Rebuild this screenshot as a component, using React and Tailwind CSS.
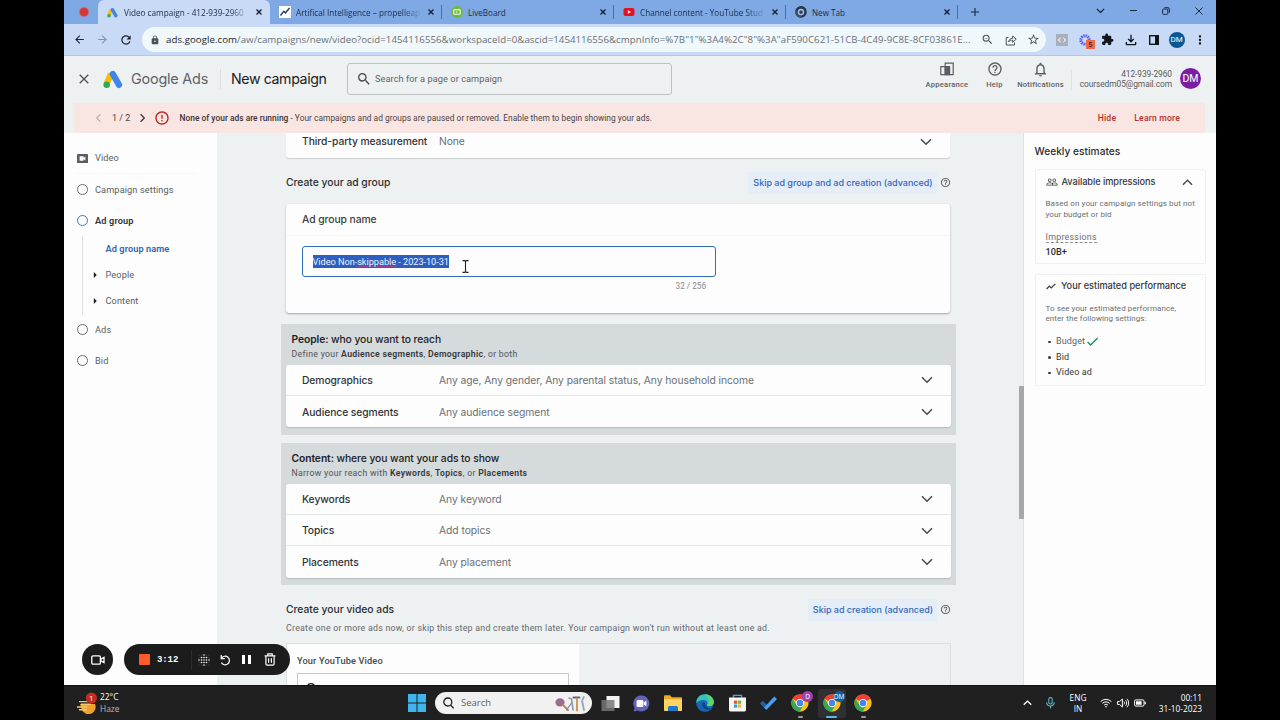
import React from 'react';
import {
    MdArrowBack, MdArrowForward, MdRefresh, MdLock, MdZoomOut, MdStarBorder, MdExtension, MdOutlineFileDownload,
    MdMoreVert, MdSearch, MdErrorOutline, MdHelpOutline, MdNotificationsNone, MdPeopleOutline, MdCheck,
    MdArrowRight, MdCode, MdAdd
} from 'react-icons/md';

const gsans = "font-['Inter','Liberation_Sans',sans-serif]";
const segoe = "font-['Open_Sans','Noto_Sans',sans-serif]";

function Chevron({ className = '', d = 'M1 1.2 6 6.2 11 1.2', w = 12, h = 7.5, sw = 1.5 }) {
    return (
        <svg width={w} height={h} viewBox="0 0 12 7.5" fill="none" stroke="currentColor" strokeWidth={sw} className={className}>
            <path d={d} />
        </svg>
    );
}

function AdsLogo({ size }) {
    return (
        <svg width={size} height={size} viewBox="0 0 24 24" className="shrink-0">
            <path d="M9.4 6 4.4 18" stroke="#fbbc04" strokeWidth="7.4" />
            <path d="M11.8 6 19.2 19" stroke="#4285e8" strokeWidth="7.6" strokeLinecap="round" />
            <circle cx="4.4" cy="19" r="3.9" fill="#34a853" />
        </svg>
    );
}

function ChromeLogo({ size, mono }) {
    return (
        <svg width={size} height={size} viewBox="0 0 48 48">
            <circle cx="24" cy="24" r="23" fill={mono ? '#27384d' : '#fbc116'} />
            <path d="M24 24 4 12.6A23 23 0 0 1 44 12.6Z" fill={mono ? '#27384d' : '#ea4335'} />
            <path d="M24 1A23 23 0 0 1 44 13H24Z" fill={mono ? '#27384d' : '#ea4335'} />
            <path d="M4 12.6A23 23 0 0 0 23 47L33.5 29.5 24 35 14.5 29.5Z" fill={mono ? '#3c4f66' : '#34a853'} />
            <circle cx="24" cy="24" r={mono ? 13 : 11} fill={mono ? '#a8c2e6' : '#fff'} />
            <circle cx="24" cy="24" r={mono ? 7.5 : 8.6} fill={mono ? '#33465c' : '#4285f4'} />
        </svg>
    );
}

function TabIcon({ kind }) {
    if (kind === 'ads') return <AdsLogo size={11} />;
    if (kind === 'chart') {
        return (
            <svg width="12" height="12" viewBox="0 0 12 12">
                <rect width="12" height="12" fill="#fff" />
                <path d="M1.5 9.5 4.8 5.2 6.4 7 10.5 2" fill="none" stroke="#1d3557" strokeWidth="1.3" />
            </svg>
        );
    }
    if (kind === 'live') {
        return (
            <svg width="12" height="12" viewBox="0 0 12 12">
                <circle cx="6" cy="6" r="6" fill="#6cbb3c" />
                <rect x="2.8" y="3.6" width="6.4" height="4.6" rx="1" fill="none" stroke="#fff" strokeWidth="1.1" />
                <path d="M5.2 5v2l1.6-1Z" fill="#fff" />
            </svg>
        );
    }
    if (kind === 'yt') {
        return (
            <svg width="12" height="12" viewBox="0 0 12 12">
                <rect x="0.5" y="1.9" width="11" height="8.2" rx="2" fill="#e8101c" />
                <path d="M4.9 4.2v3.6L8 6Z" fill="#fff" />
            </svg>
        );
    }
    return <ChromeLogo size={12} mono />;
}

const tabs = [
    { kind: 'ads', title: 'Video campaign - 412-939-2960', active: true },
    { kind: 'chart', title: 'Artifical Intelligence – propelleap' },
    { kind: 'live', title: 'LiveBoard' },
    { kind: 'yt', title: 'Channel content - YouTube Stud' },
    { kind: 'chrome', title: 'New Tab' },
];

function TabStrip() {
    return (
        <div className={`flex h-6 bg-[#7fa9e5] text-[#1c2b42] ${segoe}`}>
            <div className="flex w-[34px] shrink-0 items-center justify-center pl-1.5">
                <span className="h-2 w-2 rounded-full bg-[#d6372f] ring-1 ring-[#bb6a7a]" />
            </div>
            {tabs.map((tab) => (
                <div
                    key={tab.title}
                    className={tab.active
                        ? 'flex w-[172px] shrink-0 items-center rounded-t-md bg-[#c8daf6] pl-[9px]'
                        : 'flex w-[172px] shrink-0 items-center pl-[9px]'}
                >
                    <div className="flex w-[17px] shrink-0"><TabIcon kind={tab.kind} /></div>
                    <div className={tab.title.length > 20
                        ? 'w-[124px] shrink-0 mask-r-from-86% mask-r-to-102% pt-px text-[8.2px] leading-6 whitespace-nowrap'
                        : 'w-[124px] shrink-0 pt-px text-[8.1px] leading-6 whitespace-nowrap'}
                    >
                        {tab.title}
                    </div>
                    <div className="flex flex-1 justify-center">
                        <svg width="6" height="6" viewBox="0 0 6 6" stroke="#17202e" strokeWidth="1.4"><path d="M.5.5l5 5M5.5.5l-5 5" /></svg>
                    </div>
                    {!tab.active && <div className="h-3.5 w-px bg-[#4d6f9f]" />}
                </div>
            ))}
            <div className="flex w-[33px] items-center justify-center"><MdAdd size={14} /></div>
            <div className="ml-auto flex w-[133px] items-center justify-around pb-[3px] text-[#1b2a3f]">
                <Chevron w={9} h={5.5} sw={1.8} />
                <div className="h-px w-[7px] bg-[#1b2a3f]" />
                <svg width="8" height="8" viewBox="0 0 8 8" fill="none" stroke="currentColor"><rect x=".6" y="2" width="5.2" height="5.4" rx="1" /><path d="M2.3.7H6A1.3 1.3 0 0 1 7.3 2V6" /></svg>
                <svg width="8" height="8" viewBox="0 0 8 8" stroke="currentColor"><path d="m.5.5 7 7m0-7-7 7" /></svg>
            </div>
        </div>
    );
}

function AddressBar() {
    return (
        <div className={`flex h-[31px] items-center bg-[#c8daf6] pl-1 ${segoe}`}>
            <div className="flex w-[74px] shrink-0 text-[#1d2530]">
                <div className="flex w-[23px] justify-center"><MdArrowBack size={13} /></div>
                <div className="flex w-[23px] justify-center text-[#8393ab]"><MdArrowForward size={13} /></div>
                <div className="flex w-[23px] justify-center"><MdRefresh size={14} /></div>
            </div>
            <div className="flex h-[25px] w-[904px] shrink-0 items-center rounded-full bg-[#f0f8fc] text-[#4c5156]">
                <div className="flex w-6 shrink-0 justify-center pl-px"><MdLock size={10} /></div>
                <div className="w-[810px] shrink-0 text-[9.7px] leading-6 tracking-[0.04px] whitespace-nowrap text-[#6a7076]">
                    <span className="text-[#1f2327]">ads.google.com</span>/aw/campaigns/new/video?ocid=1454116556&amp;workspaceId=0&amp;ascid=1454116556&amp;cmpnInfo=%7B"1"%3A4%2C"8"%3A"aF590C621-51CB-4C49-9C8E-8CF03861E...
                </div>
                <div className="flex w-[23px] shrink-0 justify-center"><MdZoomOut size={13} /></div>
                <div className="flex w-[23px] shrink-0 justify-center">
                    <svg width="12" height="12" viewBox="0 0 12 12" fill="none" stroke="currentColor"><path d="M3.5 3.5H1.2V11H9.5V8.5" /><path d="M3.6 8C4 5.4 5.6 4.4 7.6 4.3V2l3.6 3.2L7.6 8.3V6.2C6 6.1 4.7 6.6 3.6 8Z" /></svg>
                </div>
                <div className="flex w-[23px] shrink-0 justify-center"><MdStarBorder size={13} /></div>
            </div>
            <div className="flex flex-1 items-center pl-1 text-[#11161c]">
                <div className="flex w-[23px] justify-center">
                    <div className="flex h-3 w-3 items-center justify-center bg-[#a8b0bb] text-white"><MdCode size={10} /></div>
                </div>
                <div className="relative flex w-[23px] justify-center">
                    <svg width="12" height="12" viewBox="0 0 12 12" fill="none" stroke="#5a5be8" strokeWidth="3"><circle cx="6" cy="6" r="4.2" strokeDasharray="1.4 .8" /></svg>
                    <div className="absolute top-[6px] left-[13px] h-[9px] w-[9px] bg-[#ef6a4a] text-center text-[7px] leading-[9px] font-semibold text-[#3a1710]">5</div>
                </div>
                <div className="flex w-[23px] justify-center"><MdExtension size={13} /></div>
                <div className="flex w-[23px] justify-center"><MdOutlineFileDownload size={16} /></div>
                <div className="flex w-[23px] justify-center">
                    <svg width="10" height="10" viewBox="0 0 10 10"><rect x=".7" y=".7" width="8.6" height="8.6" fill="none" stroke="currentColor" strokeWidth="1.4" /><path d="M6 0h4v10H6Z" fill="currentColor" /></svg>
                </div>
                <div className="flex w-[23px] justify-center">
                    <div className="h-4 w-4 shrink-0 rounded-full bg-[#0b5794] text-center font-[Roboto] text-[8px] leading-4 text-white">DM</div>
                </div>
                <div className="flex w-[23px] justify-center"><MdMoreVert size={14} /></div>
            </div>
        </div>
    );
}

function HeaderAction({ icon, label, width }) {
    return (
        <div className={`flex flex-col items-center gap-[3px] text-[#5a5f64] ${width}`}>
            <div className="flex h-[15px] items-center">{icon}</div>
            <div className="text-[7.6px] leading-[10px] font-medium tracking-[0.22px]">{label}</div>
        </div>
    );
}

function AdsHeader() {
    return (
        <div className="flex h-[47px] items-center pb-[2px]">
            <div className="flex w-[39px] shrink-0 justify-center pl-px text-[#4e5256]">
                <svg width="10" height="10" viewBox="0 0 10 10" stroke="currentColor" strokeWidth="1.3"><path d="m.7.7 8.6 8.6M9.3.7.7 9.3" /></svg>
            </div>
            <div className="w-7 shrink-0"><AdsLogo size={20} /></div>
            <div className={`w-[89px] shrink-0 text-[14.4px] tracking-[-0.2px] whitespace-nowrap text-[#5f6368] ${gsans}`}>Google Ads</div>
            <div className="h-5 w-px shrink-0 bg-[#dcdfe1]" />
            <div className={`w-[126px] shrink-0 pl-[10px] text-[14.2px] tracking-[-0.4px] whitespace-nowrap text-[#202124] ${gsans}`}>New campaign</div>
            <div className="flex h-8 w-[325px] shrink-0 items-center rounded-[3px] border border-[#bcc2c2] pl-2">
                <MdSearch size={16} className="text-[#44484c]" />
                <div className="pl-[3px] text-[9.2px] tracking-[0.07px] text-[#5f6368]">Search for a page or campaign</div>
            </div>
            <div className="ml-auto flex h-9 items-start pt-px">
                <HeaderAction width="w-[50px]" label="Appearance" icon={(
                    <svg width="14" height="14" viewBox="0 0 14 14" fill="none" stroke="currentColor" strokeWidth="1.2"><path d="M5.2 4.6H.8V12.7H5.2M5.2 12.7V1.2H13.2V12.7Z" /><path d="M5.2 4.7H9.6V12.7H5.2Z" fill="currentColor" /></svg>
                )} />
                <HeaderAction width="w-[45px]" label="Help" icon={<MdHelpOutline size={16} />} />
                <HeaderAction width="w-[47px]" label="Notifications" icon={<MdNotificationsNone size={17} />} />
                <div className="mt-2 ml-[7px] h-5 w-px bg-[#e0e3e4]" />
            </div>
            <div className="w-[100px] pt-px text-right text-[8.4px] leading-[10.5px] tracking-[-0.07px] whitespace-nowrap text-[#575b60]">
                <div>412-939-2960</div>
                <div>coursedm05@gmail.com</div>
            </div>
            <div className="mr-[15px] ml-[8px] h-[21px] w-[21px] shrink-0 rounded-full bg-[#7b1fa2] text-center text-[10.5px] leading-[21px] text-white">DM</div>
        </div>
    );
}

function AlertBanner() {
    return (
        <div className="mr-[11px] ml-[10px] flex h-[30px] items-center bg-[#f9e6e3] text-[8.4px] text-[#4b4443]">
            <Chevron className="ml-5 shrink-0 rotate-90 text-[#b9adab]" w={9} h={6} />
            <div className="w-[25px] shrink-0 pt-px pl-[9px] text-[9px] tracking-[0.02px] whitespace-nowrap">1 / 2</div>
            <Chevron className="ml-[10px] shrink-0 -rotate-90 text-[#3a3434]" w={9} h={6} sw={1.7} />
            <MdErrorOutline size={16} className="ml-[6.5px] shrink-0 text-[#b3261e]" />
            <div className="w-[480px] pl-[10px] tracking-[0.02px] whitespace-nowrap">
                <span className="font-medium text-[#3a3232]">None of your ads are running</span> - Your campaigns and ad groups are paused or removed. Enable them to begin showing your ads.
            </div>
            <div className="mr-[25px] ml-auto flex gap-[18px] text-[8.6px] font-medium tracking-[0.2px] text-[#b3322c]">
                <span>Hide</span>
                <span>Learn more</span>
            </div>
        </div>
    );
}

function Step({ label, active, className }) {
    return (
        <div className={`flex items-center ${className}`}>
            <span className={active
                ? 'h-[11px] w-[11px] rounded-full border-[1.5px] border-[#3b7cc4]'
                : 'h-[11px] w-[11px] rounded-full border-[1.5px] border-[#6a6e72]'} />
            <span className={active
                ? 'pl-[7px] text-[9.2px] font-semibold tracking-[0.15px] text-[#303336]'
                : 'pl-[7px] text-[9.2px] tracking-[0.11px] text-[#5b5f63]'}>{label}</span>
        </div>
    );
}

function Sidebar() {
    return (
        <div className="w-[153px] shrink-0 bg-[#fdfdfd] pl-[13px] text-[9.2px] text-[#5b5f63]">
            <div className="mt-3 flex h-[26px] items-center">
                <svg width="11" height="9" viewBox="0 0 11 9"><rect width="11" height="9" rx=".6" fill="#5a5e62" /><path d="M2.6 2.2h4v1.7l1.8-1.3v3.8L6.6 5.100v1.700h-4Z" fill="#fdfdfd" /></svg>
                <span className="pl-[7px] tracking-[0.1px]">Video</span>
            </div>
            <div className="mt-[2px] mr-5 h-px bg-[#f8f8f8]" />
            <Step label="Campaign settings" className="h-[31px]" />
            <Step label="Ad group" active className="h-[31px]" />
            <div className="ml-[5px] h-[79px] border-l border-[#dfe1e3]">
                <div className="flex h-[26px] items-center pl-[22.5px] font-semibold tracking-[0.08px] text-[#2c66b0]">Ad group name</div>
                <div className="flex h-[26px] items-center pl-[5px]"><MdArrowRight size={14} className="text-[#1c1c1c]" /><span className="pl-[3.5px] tracking-[0.1px]">People</span></div>
                <div className="flex h-[26px] items-center pl-[5px]"><MdArrowRight size={14} className="text-[#1c1c1c]" /><span className="pl-[3.5px] tracking-[0.1px]">Content</span></div>
            </div>
            <Step label="Ads" className="h-[29px]" />
            <Step label="Bid" className="h-[33px]" />
        </div>
    );
}

function SettingRow({ label, value, className = '' }) {
    return (
        <div className={`flex h-[31.2px] items-center pl-4 text-[10.3px] text-[#303437] ${gsans} ${className}`}>
            <span className="w-[137px] shrink-0 pt-px font-medium tracking-[-0.07px] whitespace-nowrap">{label}</span>
            <span className="flex-1 pt-px tracking-[-0.05px] whitespace-nowrap text-[#6b6f73]">{value}</span>
            <Chevron className="mr-[18px] text-[#45494c]" />
        </div>
    );
}

function SkipLink({ children, width }) {
    return (
        <div className="flex items-center">
            <div className={`flex h-[22px] items-center justify-center bg-[#e5eef8] pl-px text-[9px] font-medium tracking-[-0.02px] whitespace-nowrap text-[#3068b8] ${gsans} ${width}`}>{children}</div>
            <MdHelpOutline size={11} className="ml-[3px] text-[#5a5e62]" />
        </div>
    );
}

function TargetGroup({ name, rest, hint, rows, className }) {
    return (
        <div className={`-mx-[5px] bg-[#d5dadc] px-[5px] ${className}`}>
            <div className={`h-[23px] pt-2 pl-[5.5px] text-[10.3px] leading-[15px] font-medium tracking-[-0.08px] text-[#1f2225] ${gsans}`}>
                <span className="font-semibold">{name}</span> {rest}
            </div>
            <div className="h-[18px] pl-[5.5px] text-[8.7px] leading-[14px] tracking-[0.31px] text-[#505458]">{hint}</div>
            <div className="divide-y divide-[#e3e6e7] rounded-[3px] bg-[#fdfdfd] shadow-[0_1px_1.5px_#b4b9bb]">
                {rows.map(([label, value]) => <SettingRow key={label} label={label} value={value} />)}
            </div>
        </div>
    );
}

function MainColumn() {
    return (
        <div className="relative h-[552px] w-[807px] shrink-0 overflow-hidden bg-[#eef1f1] pr-[73px] pl-[69px] shadow-[inset_-1px_0_0_#dfe2e3]">
            <div className="mr-px h-[25px] rounded-b-[3px] bg-[#fdfdfd] shadow-[0_1px_1px_#ccd0d2]">
                <SettingRow label="Third-party measurement" value="None" className="-translate-y-[7px]" />
            </div>

            <div className="flex h-[46px] items-center justify-between pt-[3px]">
                <h2 className={`text-[10.3px] font-medium text-[#2b2e31] ${gsans}`}>Create your ad group</h2>
                <SkipLink width="w-[189px]">Skip ad group and ad creation (advanced)</SkipLink>
            </div>

            <div className="mr-px h-[109px] rounded-[3px] bg-[#fdfdfd] shadow-[0_1px_2px_#9fa5a7]">
                <div className={`flex h-8 items-center border-b border-[#f6f7f7] pt-px pl-4 text-[10.3px] font-medium tracking-[-0.05px] text-[#3a3d40] ${gsans}`}>Ad group name</div>
                <div className="mt-[10px] ml-4 w-[414px]">
                    <div className="flex h-[31px] items-center rounded-[3px] border-[1.5px] border-[#2f6fba] pl-[9.5px]">
                        <span className="bg-[#2c5fc0] text-[9.2px] leading-[13px] tracking-[-0.04px] whitespace-nowrap text-[#eef3fb]">
                            Video Non-<span className="underline decoration-[#93479a] decoration-1">skippable</span> - 2023-10-31
                        </span>
                        <svg width="7" height="13" viewBox="0 0 7 13" fill="none" stroke="#222" strokeWidth="1.1" className="mt-2.5 ml-[12.5px]"><path d="M.5.6H2.6L3.5 1.4 4.4.6H6.5M3.5 1.4V11.6M.5 12.4H2.6L3.5 11.6 4.4 12.4H6.5" /></svg>
                    </div>
                    <div className="pt-[3px] pr-[10px] text-right text-[8.2px] leading-3 text-[#85898c]">32 / 256</div>
                </div>
            </div>

            <TargetGroup
                className="mt-[11px] h-[111px]"
                name="People:"
                rest="who you want to reach"
                hint={<>Define your <b className="font-semibold text-[#33373a]">Audience segments</b>, <b className="font-semibold text-[#33373a]">Demographic</b>, or both</>}
                rows={[
                    ['Demographics', 'Any age, Any gender, Any parental status, Any household income'],
                    ['Audience segments', 'Any audience segment'],
                ]}
            />
            <TargetGroup
                className="mt-2 h-[142px]"
                name="Content:"
                rest="where you want your ads to show"
                hint={<>Narrow your reach with <b className="font-semibold text-[#33373a]">Keywords</b>, <b className="font-semibold text-[#33373a]">Topics</b>, or <b className="font-semibold text-[#33373a]">Placements</b></>}
                rows={[
                    ['Keywords', 'Any keyword'],
                    ['Topics', 'Add topics'],
                    ['Placements', 'Any placement'],
                ]}
            />

            <div className="mt-[13px] flex h-[23px] items-center justify-between">
                <h2 className={`pt-px text-[10.3px] font-medium text-[#2b2e31] ${gsans}`}>Create your video ads</h2>
                <SkipLink width="w-[129px]">Skip ad creation (advanced)</SkipLink>
            </div>
            <p className="h-[22px] text-[8.8px] leading-[14px] tracking-[0.25px] whitespace-nowrap text-[#64686c]">
                Create one or more ads now, or skip this step and create them later. Your campaign won't run without at least one ad.
            </p>
            <div className="h-[60px] border border-[#dcdfe0]">
                <div className="h-full w-[292px] bg-[#fdfdfd] pt-[10px] pl-[10px]">
                    <div className="text-[9.2px] leading-[14px] font-medium tracking-[0.15px] text-[#44484b]">Your YouTube Video</div>
                    <div className="mt-[5px] h-10 w-[272px] border border-[#c4c8ca] pt-[7px] pl-[7px]"><MdSearch size={15} className="text-[#111]" /></div>
                </div>
            </div>

            <div className="absolute top-[253px] right-0 h-[133px] w-[5px] bg-[#a5a9aa]" />
        </div>
    );
}

function Estimates() {
    return (
        <div className="min-w-0 flex-1 bg-[#fdfdfd] pr-[10px] pl-[10.5px] text-[8.4px] leading-[10.5px] text-[#6a6e72]">
            <h2 className={`h-9 pt-[10.4px] text-[10.2px] leading-4 font-medium text-[#2b2e31] ${gsans}`}>Weekly estimates</h2>
            <div className="h-[95px] rounded-[2px] border border-[#eff0f1] px-[10px]">
                <div className="flex h-6 items-center">
                    <MdPeopleOutline size={12} className="shrink-0 text-[#33373a]" />
                    <span className={`flex-1 pl-1 text-[9.2px] font-medium tracking-[-0.06px] whitespace-nowrap text-[#33373a] ${gsans}`}>Available impressions</span>
                    <Chevron d="M1 6.2 6 1.2 11 6.2" w={11} h={7} className="mr-[2px] text-[#45494c]" />
                </div>
                <div className="mt-[5px] text-[8px] tracking-[0.1px] whitespace-nowrap">Based on your campaign settings but not<br />your budget or bid</div>
                <div className="mt-[11.5px] flex"><span className="border-b border-dashed border-[#8a8e92] text-[8.8px] tracking-[0.28px]">Impressions</span></div>
                <div className="mt-[3.5px] text-[9.2px] font-medium text-[#2b2e31]">10B+</div>
            </div>
            <div className="mt-[10px] h-[112px] rounded-[2px] border border-[#eff0f1] px-[10px]">
                <div className="flex h-[23px] items-center">
                    <svg width="10" height="7" viewBox="0 0 10 7" fill="none" stroke="#33373a" strokeWidth="1.2"><path d="M.6 6 3.4 3.2 5.2 5 9.4.8" /></svg>
                    <span className={`pl-[5.5px] text-[9.2px] font-medium whitespace-nowrap text-[#33373a] ${gsans}`}>Your estimated performance</span>
                </div>
                <div className="mt-[5.5px] text-[8px] tracking-[0.08px] whitespace-nowrap">To see your estimated performance,<br />enter the following settings:</div>
                <ul className="mt-[9.5px] text-[9px] leading-[15.6px] tracking-[0.12px] text-[#33373a]">
                    <li className="flex h-[15.7px] items-center"><span className="mr-[5.5px] ml-[2.5px] h-[2.5px] w-[2.5px] rounded-full bg-current" /><span className="text-[#5f6367]">Budget</span><MdCheck size={15} className="text-[#1e8e5a]" /></li>
                    <li className="flex h-[15.7px] items-center"><span className="mr-[5.5px] ml-[2.5px] h-[2.5px] w-[2.5px] rounded-full bg-current" />Bid</li>
                    <li className="flex h-[15.7px] items-center"><span className="mr-[5.5px] ml-[2.5px] h-[2.5px] w-[2.5px] rounded-full bg-current" />Video ad</li>
                </ul>
            </div>
        </div>
    );
}

const dots = [-2, -1, 0, 1, 2];

// floating recorder controls, they sit on top of the page
function Recorder() {
    return (
        <div className="absolute top-[644px] left-[82px] flex items-center gap-[11px] text-white">
            <div className="flex h-[31px] w-[31px] items-center justify-center rounded-full bg-[#1c1c1c]">
                <svg width="14" height="10" viewBox="0 0 14 10" fill="none" stroke="currentColor" strokeWidth="1.3"><rect x=".8" y=".8" width="8.6" height="8.4" rx="1.2" /><path d="m9.6 4.4 3.4-2v5.2l-3.4-2Z" /></svg>
            </div>
            <div className="flex h-[31px] w-[166px] items-center rounded-full bg-[#1c1c1c] pl-[15px]">
                <div className="h-[11px] w-[11px] rounded-[1px] bg-[#ff5a2c]" />
                <div className="w-[41px] pt-[2px] pl-[7px] font-['Liberation_Mono',monospace] text-[9px] font-bold tracking-[-0.1px]">3:12</div>
                <div className="h-5 w-px bg-[#2d2d2d]" />
                <svg width="12" height="12" viewBox="-6 -6 12 12" fill="currentColor" className="ml-[6px]">
                    {dots.map((x) => dots.map((y) => (
                        <circle key={`${x}${y}`} cx={x * 2.5} cy={y * 2.5} r={Math.abs(x) + Math.abs(y) > 2 ? 0.3 : 0.8} />
                    )))}
                </svg>
                <svg width="11" height="12" viewBox="0 0 11 12" fill="none" stroke="currentColor" strokeWidth="1.2" className="ml-[10px]"><path d="M1.2 1v3.6h3.6M1.4 4.4A4.3 4.3 0 1 1 1.4 8.6" /></svg>
                <div className="ml-[11px] flex gap-[3px]"><span className="h-[9px] w-[3px] bg-white" /><span className="h-[9px] w-[3px] bg-white" /></div>
                <svg width="12" height="13" viewBox="0 0 12 13" fill="none" stroke="currentColor" strokeWidth="1.2" className="ml-[13px]"><path d="M.6 2.8h10.8M3.8 2.6V.8h4.4v1.8M1.9 3v8a1.2 1.2 0 0 0 1.2 1.2h5.8a1.2 1.2 0 0 0 1.2-1.2V3M4.6 5.2v4.6M7.4 5.2v4.6" /></svg>
            </div>
        </div>
    );
}

function ChromeTask({ badge, badgeColor, active }) {
    return (
        <div className={active
            ? 'relative flex h-[29px] w-7 items-center justify-center rounded-[3px] bg-[#303032]'
            : 'relative flex h-[29px] w-7 items-center justify-center'}
        >
            <ChromeLogo size={18} />
            {badge && <div className={`absolute top-[2px] right-[1px] h-[11px] w-[11px] rounded-full text-center text-[6.5px] leading-[11px] text-white ${badgeColor}`}>{badge}</div>}
            <div className={active
                ? 'absolute bottom-0 h-[2px] w-[11px] rounded-full bg-[#5cb8ec]'
                : 'absolute bottom-0 h-[2px] w-[5px] rounded-full bg-[#9b9b9b]'} />
        </div>
    );
}

function Taskbar() {
    return (
        <div className={`flex h-[35px] items-center border-t border-[#121212] bg-[#202020] text-white ${segoe}`}>
            <div className="flex w-[342px] shrink-0 items-center pl-[13px]">
                <svg width="20" height="22" viewBox="0 0 20 22" className="shrink-0">
                    <path d="M3 12h15a7 7 0 0 1-13 6Z" fill="#f0a12f" />
                    <path d="M2 9.6h9M4 12.2h10M0 15h10M2 17.8h8" stroke="#f7c964" strokeWidth="1.4" />
                    <circle cx="14.4" cy="6" r="5.6" fill="#c42b1c" />
                    <text x="14.4" y="8.8" fontSize="8" fill="#fff" textAnchor="middle">1</text>
                </svg>
                <div className="pl-[3px] text-[8.4px] leading-[11.6px]">
                    <div>22°C</div>
                    <div className="text-[#b9b9b9]">Haze</div>
                </div>
            </div>
            <svg width="18" height="18" viewBox="0 0 18 18" className="ml-[2px] shrink-0"><path d="M0 0h8.5v8.5H0ZM9.5 0H18v8.5H9.5ZM0 9.5h8.5V18H0ZM9.5 9.5H18V18H9.5Z" fill="#3fb4ee" /></svg>
            <div className="ml-[9px] flex h-[22px] w-[157px] shrink-0 items-center rounded-full bg-[#f1f1f1] pr-[5px] pl-2">
                <svg width="11" height="12" viewBox="0 0 11 12" fill="none" stroke="#1e1e1e" strokeWidth="1.3"><circle cx="4.8" cy="5" r="4" /><path d="m7.6 8 3 3.4" /></svg>
                <span className="flex-1 pl-[7px] text-[9.5px] text-[#5e5e5e]">Search</span>
                <svg width="32" height="17" viewBox="0 0 32 17" fill="none" strokeLinecap="round">
                    <ellipse cx="5" cy="7.4" rx="4.6" ry="4.2" fill="#9b6a8c" />
                    <path d="m8 10 5 5" stroke="#c08a5a" strokeWidth="2" />
                    <path d="m14 3 2.6 1L18 15" stroke="#8f9aa3" strokeWidth="1.6" />
                    <path d="M18.5 2.4h6" stroke="#5f6a73" strokeWidth="2" />
                    <path d="M22 4v11.5" stroke="#d09a5f" strokeWidth="2" />
                    <path d="M28.8 2 27 6l2 9" stroke="#93a5b2" strokeWidth="1.8" />
                    <path d="m11.5 15 5-7" stroke="#7289b3" strokeWidth="1.2" />
                </svg>
            </div>
            <div className="flex items-center pl-[2px]">
                <div className="flex w-8 justify-center">
                    <svg width="19" height="17" viewBox="0 0 19 17"><rect x="5.5" y="1" width="13" height="12" fill="#f3f3f3" /><rect x=".5" y="5" width="13" height="11" fill="#777" fillOpacity=".85" /></svg>
                </div>
                <div className="flex w-[31px] justify-center">
                    <svg width="17" height="17" viewBox="0 0 17 17"><path d="M8.5.5a8 8 0 1 1-4 15L.6 16.6l1-3.8A8 8 0 0 1 8.5.5Z" fill="#6264b8" /><rect x="3.6" y="5" width="6.8" height="7" rx="1.2" fill="#fff" /><path d="m10.8 7.6 2.6-2v5.8l-2.6-2Z" fill="#fff" /></svg>
                </div>
                <div className="flex w-8 justify-center">
                    <svg width="18" height="16" viewBox="0 0 18 16"><path d="M0 1.4C0 .6.6.2 1.2.2H6l1.8 2H17c.6 0 1 .4 1 1V14H0Z" fill="#eaa92c" /><path d="M0 4.2h18V15c0 .6-.4 1-1 1H1c-.6 0-1-.4-1-1Z" fill="#fcd462" /><path d="M4 16v-3.4c0-1 .8-1.6 1.6-1.6h6.8c.8 0 1.6.6 1.6 1.6V16Z" fill="#1f78c8" /></svg>
                </div>
                <div className="flex w-8 justify-center">
                    <svg width="18" height="18" viewBox="0 0 18 18"><circle cx="9" cy="9" r="8.8" fill="#1667b5" /><path d="M.4 7.4C1 3 4.6.2 9 .2c5 0 8.8 3.8 8.8 7.6 0 3-2 4.4-4.6 4.4-2 0-2.8-1-2-2 .6-1.2.2-3.6-2.6-4C5.2 5.6 2 7.2.4 9Z" fill="#35c1b8" /><path d="M9 .2c5 0 8.8 3.8 8.8 7.6 0 3-2 4.4-4.6 4.4-1.4 0-2.4-.6-2.2-1.4C14 9 13.6 4 9 .2Z" fill="#5fd46c" /><path d="M7 8.4c-1.6 3 .4 6.6 4 7.2 2 .4 4-.4 5.2-1.4-3.4.8-8-1-7.4-5.2Z" fill="#0c3f7c" /></svg>
                </div>
                <div className="flex w-8 justify-center">
                    <svg width="17" height="18" viewBox="0 0 17 18"><path d="M4.5 4V1.4h8V4" fill="none" stroke="#3fa7e6" strokeWidth="1.4" /><path d="M0 3.6h17V16c0 .8-.6 1.4-1.4 1.4H1.4C.6 17.4 0 16.8 0 16Z" fill="#f5f5f5" /><path d="M5 6.6h3.2v3.2H5Z" fill="#e8502e" /><path d="M8.9 6.6h3.2v3.2H8.9Z" fill="#7bb43c" /><path d="M5 10.5h3.2v3.2H5Z" fill="#2f9fe0" /><path d="M8.9 10.5h3.2v3.2H8.9Z" fill="#f5b52a" /></svg>
                </div>
                <div className="flex w-[31px] justify-center">
                    <svg width="17" height="14" viewBox="0 0 17 14"><path d="m0 7.6 2.8-2.8 5.6 5.4-2.8 3Z" fill="#1f5fb0" /><path d="m4.2 11.6 10-11L17 3 7 13.2c-.6.6-1 .6-1.6 0Z" fill="#4a9ef0" /></svg>
                </div>
                <div className="ml-[2px] flex gap-[3.5px]">
                    <ChromeTask badge="D" badgeColor="bg-[#a33fb5]" />
                    <ChromeTask badge="DM" badgeColor="bg-[#10609e]" active />
                    <ChromeTask />
                </div>
            </div>
            <div className="mr-[14px] ml-auto flex items-center text-[8.3px] leading-[11.5px]">
                <Chevron d="M1 6.2 6 1.2 11 6.2" w={9} h={6} sw={1.8} />
                <svg width="9" height="12" viewBox="0 0 9 12" fill="none" stroke="#5fb3c4" strokeWidth="1.1" className="ml-[14px]"><rect x="2.8" y=".6" width="3.4" height="6.4" rx="1.7" /><path d="M.7 5.2c0 5 7.6 5 7.6 0M4.5 9v2.6" /></svg>
                <div className="ml-[14px] w-[18px] text-center"><div>ENG</div><div>IN</div></div>
                <svg width="12" height="10" viewBox="0 0 12 10" fill="none" stroke="#fff" strokeWidth="1" className="ml-[13px]"><path d="M.6 3.6a7.6 7.6 0 0 1 10.8 0M2.4 5.4a5 5 0 0 1 7.2 0M4.1 7.1a2.6 2.6 0 0 1 3.8 0" /><circle cx="6" cy="8.7" r=".8" fill="#fff" stroke="none" /></svg>
                <svg width="12" height="10" viewBox="0 0 12 10" fill="none" stroke="#fff" strokeWidth="1" className="ml-[5px]"><path d="M.6 3.5h2L5.4 1v8L2.6 6.5h-2ZM7 3.6c.7.8.7 2 0 2.8M8.6 2.2c1.5 1.6 1.5 4 0 5.6M10 .8c2.2 2.4 2.2 6 0 8.4" /></svg>
                <svg width="12" height="8" viewBox="0 0 12 8" className="ml-[5px]"><rect x=".6" y=".9" width="9.4" height="6.2" rx="1.2" fill="none" stroke="#fff" /><path d="M2 2.2h5.6v3.6H2ZM10.6 2.8h1.2v2.4h-1.2Z" fill="#fff" /></svg>
                <div className="ml-[4px] w-[52px] text-right whitespace-nowrap"><div>00:11</div><div>31-10-2023</div></div>
            </div>
        </div>
    );
}

export default function App() {
    return (
        <div className="h-[720px] w-[1280px] overflow-hidden bg-black px-16 font-[Roboto,'Liberation_Sans',sans-serif]">
            <div className="relative h-full bg-[#eef1f1]">
                <TabStrip />
                <AddressBar />
                <div className="h-px bg-[#b7c6da]" />
                <AdsHeader />
                <AlertBanner />
                <div className="flex h-[552px]">
                    <Sidebar />
                    <MainColumn />
                    <Estimates />
                </div>
                <Taskbar />
            </div>
            <Recorder />
        </div>
    );
}
